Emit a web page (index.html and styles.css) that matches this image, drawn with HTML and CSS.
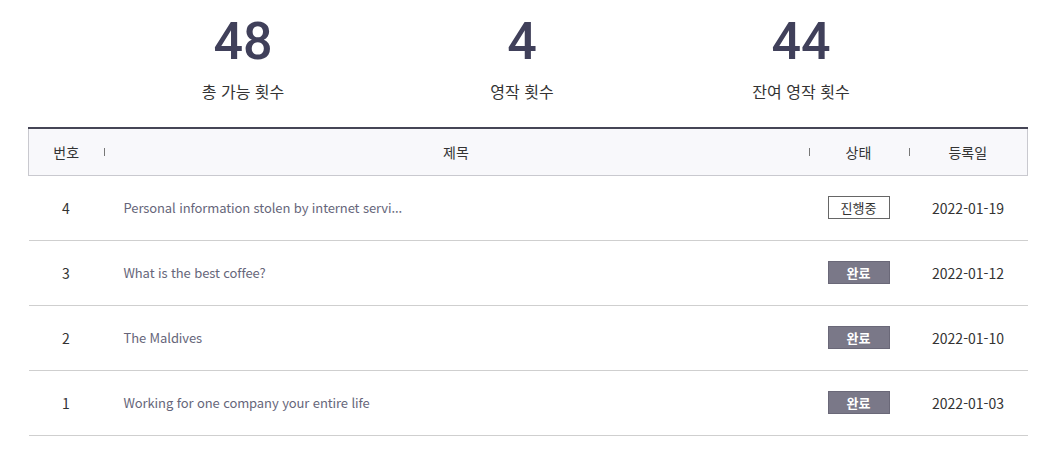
FILE: index.html
```html
<!DOCTYPE html>
<html lang="ko">
<head>
<meta charset="utf-8">
<link rel="stylesheet" href="styles.css">
</head>
<body>
<div class="page">
  <div class="stats">
    <div class="stat"><div class="num">48</div><div class="label">총 가능 횟수</div></div>
    <div class="stat"><div class="num">4</div><div class="label">영작 횟수</div></div>
    <div class="stat"><div class="num">44</div><div class="label">잔여 영작 횟수</div></div>
  </div>
  <table class="board">
    <colgroup>
      <col class="c-no"><col class="c-title"><col class="c-state"><col class="c-date">
    </colgroup>
    <thead>
      <tr>
        <th><span>번호</span></th>
        <th class="sep"><span>제목</span></th>
        <th class="sep"><span>상태</span></th>
        <th class="sep"><span>등록일</span></th>
      </tr>
    </thead>
    <tbody>
      <tr><td>4</td><td class="title">Personal information stolen by internet servi...</td><td><span class="badge ing">진행중</span></td><td class="date">2022-01-19</td></tr>
      <tr><td>3</td><td class="title">What is the best coffee?</td><td><span class="badge done">완료</span></td><td class="date">2022-01-12</td></tr>
      <tr><td>2</td><td class="title">The Maldives</td><td><span class="badge done">완료</span></td><td class="date">2022-01-10</td></tr>
      <tr><td>1</td><td class="title">Working for one company your entire life</td><td><span class="badge done">완료</span></td><td class="date">2022-01-03</td></tr>
    </tbody>
  </table>
</div>
</body>
</html>
```

FILE: styles.css
```css
* { box-sizing: border-box; }
html, body { margin: 0; padding: 0; background: #fff; }
body {
  font-family: "Noto Sans CJK KR", sans-serif;
  color: #333;
}
.page {
  width: 1000px;
  margin-left: 28px;
}
.stats {
  display: grid;
  grid-template-columns: repeat(3, 279px);
  justify-content: center;
  padding-right: 12px;
  padding-top: 14px;
  height: 127px;
}
.stat { text-align: center; }
.num {
  font-family: "Roboto", sans-serif;
  font-size: 52px;
  font-weight: 500;
  line-height: 56px;
  color: #40405a;
}
.label {
  margin-top: 9px;
  font-size: 16px;
  line-height: 24px;
  color: #333;
}
.board {
  width: 999px;
  border-collapse: collapse;
  table-layout: fixed;
}
.c-no { width: 75px; }
.c-title { width: 705px; }
.c-state { width: 100px; }
.c-date { width: 119px; }
.board thead tr {
  background: #f8f8fb;
  border-top: 2px solid #454556;
  border-bottom: 1px solid #c9c9cf;
  border-left: 1px solid #c9c9cf;
  border-right: 1px solid #c9c9cf;
}
.board th {
  height: 47px;
  padding: 0;
  font-weight: 400;
  font-size: 14px;
  color: #333;
  text-align: center;
  position: relative;
}
.board th.sep::before {
  content: "";
  position: absolute;
  left: 0;
  top: 50%;
  width: 1px;
  height: 8px;
  margin-top: -4px;
  background: #777;
}
.board td {
  height: 65px;
  padding: 0;
  font-size: 14px;
  text-align: center;
  border-bottom: 1px solid #cfcfcf;
  color: #333;
}
.board td.title {
  text-align: left;
  padding-left: 20px;
  font-size: 13px;
  letter-spacing: -0.1px;
  color: #66667a;
}
.board td.date { color: #333; }
.badge {
  display: inline-block;
  width: 62px;
  height: 23px;
  line-height: 21px;
  font-size: 13px;
  border: 1px solid #666;
  vertical-align: middle;
}
.badge.ing { background: #fff; color: #333; }
.badge.done { background: #7a7888; color: #fff; border-color: #6a6878; font-weight: 700; }
```
